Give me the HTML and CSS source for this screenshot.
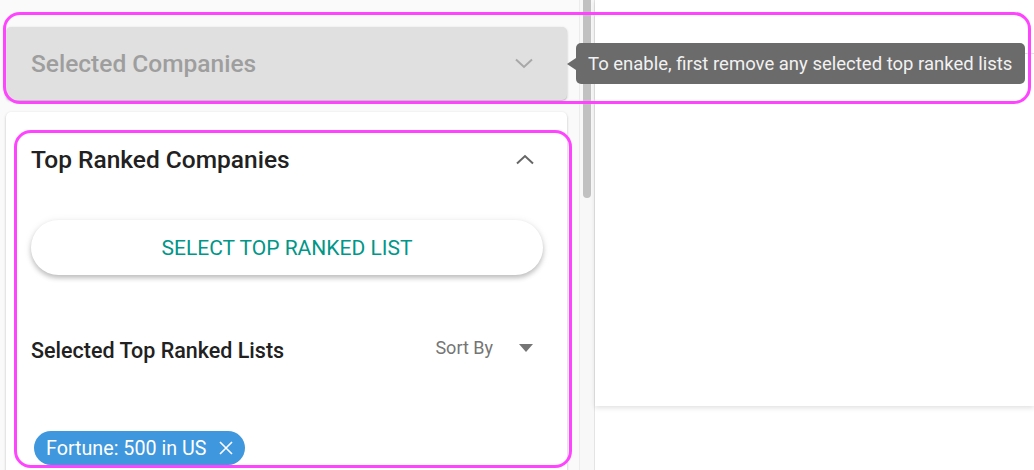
FILE: index.html
```html
<!DOCTYPE html>
<html lang="en">

<head>
    <meta charset="UTF-8">
    <meta name="viewport" content="width=device-width, initial-scale=1.0">
    <title>Company Filters</title>

    <link rel="stylesheet" href="styles.css">
</head>

<body>

    <div id="page">
        <aside class="sidebar">
            <div class="card card-disabled">
                <span class="card-title">Selected Companies</span>
                <svg class="chevron" width="18" height="11" viewBox="0 0 18 11">
                    <polyline points="1,1.5 9,9 17,1.5" fill="none" stroke="#a8a8a8" stroke-width="2" />
                </svg>
            </div>

            <div class="card card-ranked">
                <div class="ranked-head">
                    <span class="card-title dark">Top Ranked Companies</span>
                    <svg class="chevron" width="18" height="11" viewBox="0 0 18 11">
                        <polyline points="1,9.5 9,2 17,9.5" fill="none" stroke="#666" stroke-width="2" />
                    </svg>
                </div>

                <button class="select-btn">Select Top Ranked List</button>

                <div class="lists-head">
                    <span class="lists-title">Selected Top Ranked Lists</span>
                    <span class="sort">
                        Sort By
                        <svg width="14" height="8" viewBox="0 0 14 8">
                            <polygon points="0,0 14,0 7,8" fill="#757575" />
                        </svg>
                    </span>
                </div>

                <div class="chips">
                    <span class="chip">
                        Fortune: 500 in US
                        <svg width="14" height="14" viewBox="0 0 14 14">
                            <path d="M1 1 L13 13 M13 1 L1 13" stroke="#fff" stroke-width="1.6" />
                        </svg>
                    </span>
                </div>
            </div>
        </aside>

        <div class="scrollbar">
            <div class="thumb"></div>
        </div>

        <main class="main">
            <div class="panel">
                <div class="panel-head"></div>
            </div>
        </main>

        <div class="tooltip">To enable, first remove any selected top ranked lists</div>

        <!-- highlight marks -->
        <div class="mark mark-top"></div>
        <div class="mark mark-ranked"></div>
    </div>

</body>

</html>
```

FILE: styles.css
```css
body {
    margin: 0;
    background: #fff;
    font-family: Roboto, "Liberation Sans", sans-serif;
    color: #212121;
}

#page {
    position: relative;
    display: flex;
    width: 1034px;
    height: 470px;
    overflow: hidden;
}

.sidebar {
    width: 561px;
    padding: 27px 12px 0 6px;
    background: #fafafa;
    flex-shrink: 0;
}

.card {
    border-radius: 5px;
    box-shadow: 0 1px 3px rgba(0, 0, 0, 0.2), 0 1px 1px rgba(0, 0, 0, 0.12);
}

.card-disabled {
    height: 73px;
    background: #e0e0e0;
    display: flex;
    align-items: center;
    justify-content: space-between;
    padding: 0 34px 0 25px;
}

.card-title {
    font-size: 24.5px;
    font-weight: 500;
    color: #9e9e9e;
}

.card-title.dark {
    color: #212121;
}

.card-ranked {
    margin-top: 12px;
    height: 400px;
    background: #fff;
    padding: 33px 24px 0 25px;
}

.ranked-head {
    display: flex;
    align-items: center;
    justify-content: space-between;
    height: 28px;
    padding-right: 9px;
}

.select-btn {
    display: block;
    width: 100%;
    height: 55px;
    margin-top: 47px;
    border: none;
    border-radius: 28px;
    background: #fff;
    box-shadow: 0 3px 5px rgba(0, 0, 0, 0.22), 0 1px 8px rgba(0, 0, 0, 0.08);
    font-family: Roboto, "Liberation Sans", sans-serif;
    font-size: 21px;
    text-transform: uppercase;
    color: #009688;
}

.lists-head {
    display: flex;
    align-items: center;
    justify-content: space-between;
    height: 28px;
    margin-top: 61px;
    padding-right: 10px;
}

.lists-title {
    font-size: 21.5px;
    font-weight: 500;
}

.sort {
    display: flex;
    align-items: center;
    gap: 26px;
    font-size: 18px;
    color: #757575;
    margin-top: -5px;
}

.chips {
    margin-top: 67px;
    padding-left: 3px;
}

.chip {
    display: inline-flex;
    align-items: center;
    gap: 13px;
    height: 34px;
    padding: 0 12px 0 12px;
    border-radius: 17px;
    background: #3f97dd;
    color: #fff;
    font-size: 19.7px;
}

.scrollbar {
    width: 14px;
    flex-shrink: 0;
    background: #f8f8f8;
    border-left: 1px solid #ececec;
    border-right: 1px solid #e4e4e4;
}

.thumb {
    width: 8px;
    height: 198px;
    margin-left: 3px;
    background: #c1c1c1;
    border-radius: 0 0 4px 4px;
}

.main {
    flex: 1;
}

.panel {
    height: 406px;
    background: #fff;
    box-shadow: 0 2px 5px rgba(0, 0, 0, 0.12);
}

.panel-head {
    height: 53px;
    border-bottom: 1px solid #e2e2e2;
}

.tooltip {
    position: absolute;
    left: 576px;
    top: 43px;
    height: 41px;
    width: 449px;
    box-sizing: border-box;
    padding-left: 12px;
    display: flex;
    align-items: center;
    background: #6b6b6b;
    border-radius: 5px;
    color: #f2f2f2;
    font-size: 18.5px;
}

.tooltip::before {
    content: "";
    position: absolute;
    left: -9px;
    top: 15px;
    border-top: 6px solid transparent;
    border-bottom: 6px solid transparent;
    border-right: 9px solid #6b6b6b;
}

.mark {
    position: absolute;
    border: 3px solid #ff44ff;
    border-radius: 17px;
    box-sizing: border-box;
}

.mark-top {
    left: 3px;
    top: 12px;
    width: 1028px;
    height: 92px;
}

.mark-ranked {
    left: 14px;
    top: 130px;
    width: 558px;
    height: 338px;
}
```
